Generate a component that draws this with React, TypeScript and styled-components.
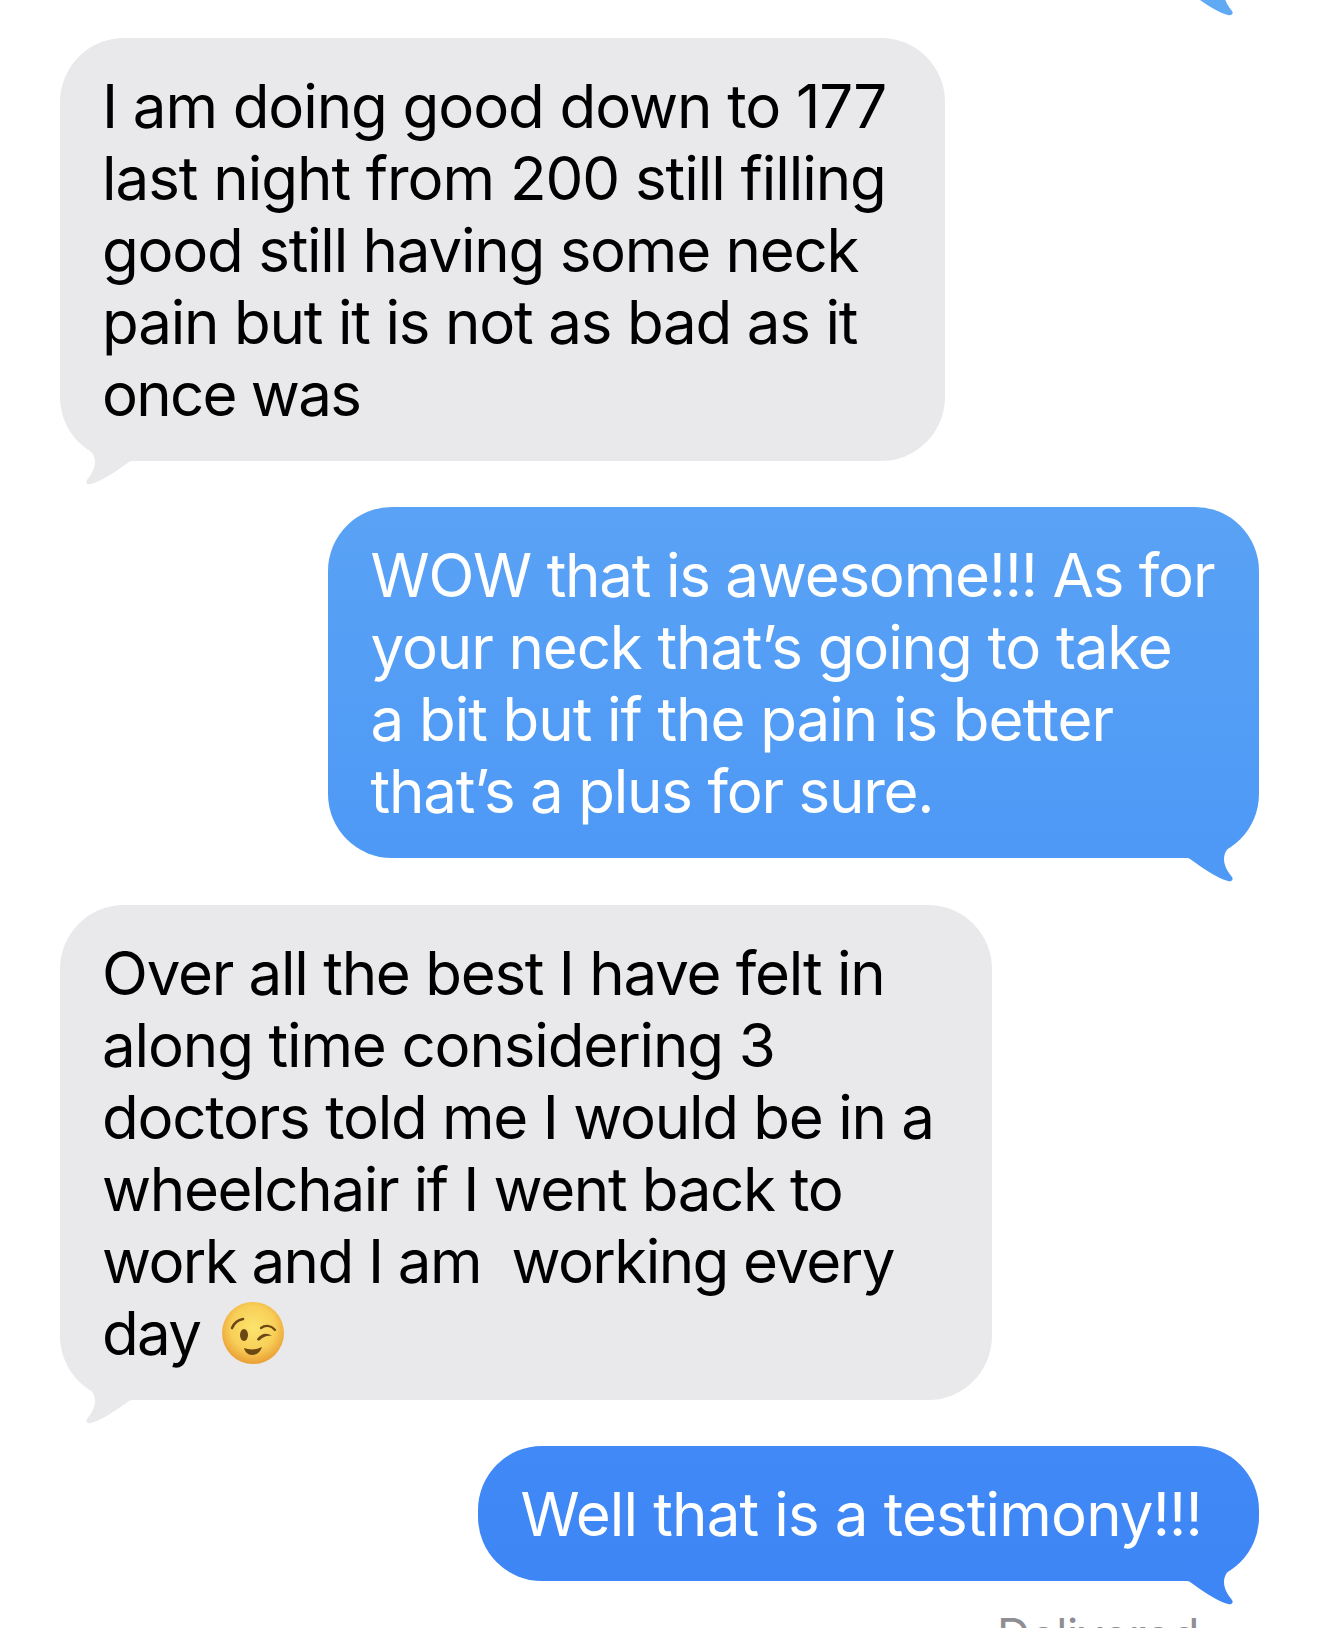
import React from "react";
import styled, { createGlobalStyle } from "styled-components";

const Global = createGlobalStyle`
  html, body { margin: 0; padding: 0; background: #fff; }
  body { width: 1320px; height: 1628px; overflow: hidden; }
`;

const Thread = styled.main`
  display: flex;
  flex-direction: column;
  gap: 46px;
  width: 1320px;
  height: 1628px;
  padding: 0 61px 0 60px;
  box-sizing: border-box;
  overflow: hidden;
  font-family: Inter, "Liberation Sans", sans-serif;
`;

const Bubble = styled.div<{ $sent?: boolean; $from: string; $to: string; $width: number; $nudge?: number }>`
  position: relative;
  flex: none;
  box-sizing: border-box;
  width: ${(p) => p.$width}px;
  align-self: ${(p) => (p.$sent ? "flex-end" : "flex-start")};
  margin-top: ${(p) => p.$nudge ?? 0}px;
  padding: 31.5px 0 31.5px ${(p) => (p.$sent ? 42.5 : 42)}px;
  border-radius: 64px;
  background: linear-gradient(${(p) => p.$from}, ${(p) => p.$to});
  color: ${(p) => (p.$sent ? "#fff" : "#000")};
  font-size: 60px;
  font-weight: 400;
  line-height: 72px;
  white-space: nowrap;
`;

const ClippedBubble = styled(Bubble)`
  height: 91px;
  margin-top: -99px;
`;

const Line = styled.span<{ $track: number }>`
  display: block;
  letter-spacing: ${(p) => p.$track}px;
`;

const TailSvg = styled.svg<{ $sent?: boolean }>`
  position: absolute;
  bottom: -28px;
  ${(p) => (p.$sent ? "right: 19px;" : "left: 19px; transform: scaleX(-1);")}
  width: 70px;
  height: 55px;
`;

const Status = styled.div`
  align-self: flex-end;
  margin-top: -18px;
  margin-right: 60px;
  color: #8e8e93;
  font-size: 46px;
  line-height: 53px;
  letter-spacing: -0.4px;
`;

const EmojiSvg = styled.svg`
  display: inline-block;
  width: 62px;
  height: 62px;
  margin-left: 22px;
  vertical-align: -9px;
`;

const Tail = ({ sent, fill }: { sent?: boolean; fill: string }) => (
  <TailSvg $sent={sent} viewBox="0 0 70 55" aria-hidden="true">
    <path
      fill={fill}
      d="M63 13C57 17 54 22 54 28C54 35 58 41 62 46C64 49 61 51 58 50C46 47 30 35 20 28C19 27 18 27 16 27L16 0L63 0Z"
    />
  </TailSvg>
);

const Wink = () => (
  <EmojiSvg viewBox="0 0 62 62" role="img" aria-label="winking face">
    <defs>
      <radialGradient id="winkFace" cx="50%" cy="42%" r="58%">
        <stop offset="0%" stopColor="#FCE46E" />
        <stop offset="62%" stopColor="#F8CF58" />
        <stop offset="100%" stopColor="#E99F34" />
      </radialGradient>
    </defs>
    <circle cx="31" cy="31" r="31" fill="url(#winkFace)" />
    <path d="M10 26C12 21 16 18 21 17" fill="none" stroke="#6b4714" strokeWidth="2.6" strokeLinecap="round" />
    <path d="M39 26C43 23 49 23 53 28" fill="none" stroke="#6b4714" strokeWidth="2.2" strokeLinecap="round" />
    <ellipse cx="22" cy="33" rx="4" ry="6" fill="#6b4714" />
    <path d="M35 37C39 32 44 30 50 34C45 33 41 35 38 38C36.5 39 35 38.5 35 37Z" fill="#6b4714" />
    <path d="M22 46C27 48 34 48 40 45C38 51 34 53 30 53C26 53 23 50 22 46Z" fill="#6b4714" />
  </EmojiSvg>
);

export default function App() {
  return (
    <Thread>
      <Global />
      <ClippedBubble $sent $from="#5FA9F5" $to="#5FA9F5" $width={600}>
        <Tail sent fill="#5FA9F5" />
      </ClippedBubble>

      <Bubble $from="#E9E9EB" $to="#E9E9EB" $width={885}>
        <Line $track={-1.08}>I am doing good down to 177</Line>
        <Line $track={-1.03}>last night from 200 still filling</Line>
        <Line $track={-1.23}>good still having some neck</Line>
        <Line $track={-1.18}>pain but it is not as bad as it</Line>
        <Line $track={-1.74}>once was</Line>
        <Tail fill="#E9E9EB" />
      </Bubble>

      <Bubble $sent $from="#59A2F5" $to="#4E99F6" $width={931}>
        <Line $track={-1.21}>WOW that is awesome!!! As for</Line>
        <Line $track={-1.11}>your neck that’s going to take</Line>
        <Line $track={-1.05}>a bit but if the pain is better</Line>
        <Line $track={-1.21}>that’s a plus for sure.</Line>
        <Tail sent fill="#4E99F6" />
      </Bubble>

      <Bubble $from="#E9E9EB" $to="#E9E9EB" $width={932} $nudge={1}>
        <Line $track={-1.25}>Over all the best I have felt in</Line>
        <Line $track={-1.13}>along time considering 3</Line>
        <Line $track={-1.25}>doctors told me I would be in a</Line>
        <Line $track={-1.35}>wheelchair if I went back to</Line>
        <Line $track={-1.57}>work and I am&nbsp; working every</Line>
        <Line $track={-1.65}>
          day
          <Wink />
        </Line>
        <Tail fill="#E9E9EB" />
      </Bubble>

      <Bubble $sent $from="#4089F6" $to="#3E86F5" $width={781}>
        <Line $track={-0.85}>Well that is a testimony!!!</Line>
        <Tail sent fill="#3E86F5" />
      </Bubble>

      <Status>Delivered</Status>
    </Thread>
  );
}
